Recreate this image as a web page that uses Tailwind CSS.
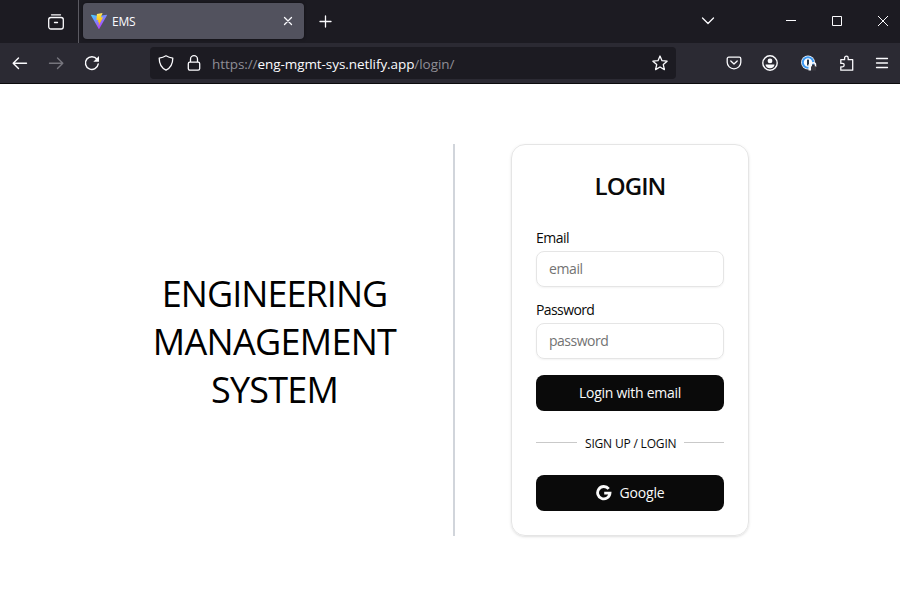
<!DOCTYPE html>
<html lang="en">
<head>
<meta charset="utf-8">
<title>EMS</title>
<script src="https://cdn.jsdelivr.net/npm/@tailwindcss/browser@4"></script>
</head>
<body class="w-[900px] h-[592px] overflow-hidden bg-white font-['Open_Sans','Noto_Sans',sans-serif] text-black">
<header class="flex flex-col h-[84px] border-b border-[#0c0c0d] bg-[#2b2a33] text-[#fbfbfe]">
  <div class="flex h-[43px] bg-[#1c1b22]">
    <div class="flex w-[79px] items-center justify-end border-r border-[#5b5a62] pr-[14px]">
      <svg class="size-4" viewBox="0 0 16 16" fill="none" stroke="currentColor" stroke-width="1.3" stroke-linecap="round"><path d="M3.500.8h9"/><rect x=".7" y="3.500" width="14.600" height="11.500" rx="2.200"/><path d="M6.500 8.500h3"/></svg>
    </div>
    <div class="ml-1 mt-[3px] flex h-9 w-[221px] items-center rounded bg-[#52525e] pl-2 pr-[11px] shadow-[0_0_3px_rgba(0,0,0,0.5)]">
      <svg class="size-4" viewBox="0 0 16 16"><defs><linearGradient id="a" x1="0" y1="0" x2=".6" y2="1"><stop stop-color="#41d1ff"/><stop offset="1" stop-color="#bd34fe"/></linearGradient><linearGradient id="b" x1=".4" y1="0" x2=".5" y2="1"><stop stop-color="#ffea83"/><stop offset=".2" stop-color="#ffdd35"/><stop offset="1" stop-color="#ffa800"/></linearGradient></defs><path fill="url(#a)" d="M15.900 2.400 8.300 15.800a.4.4 0 0 1-.7 0L.1 2.400a.4.4 0 0 1 .4-.6L8 3.100l7.500-1.300a.4.4 0 0 1 .4.600z"/><path fill="url(#b)" d="M11.600 0 5.900 1.100 5.500 7.300l1.900-.4-.6 2.600 1.400-.4-.8 4.200 4.700-9.100-2.300.4z"/></svg>
      <span class="ml-[5px] flex-1 pt-px text-[12px] tracking-[-0.2px]">EMS</span>
      <svg class="size-[10px]" viewBox="0 0 10 10" stroke="currentColor" stroke-width="1.300" stroke-linecap="round"><path d="m1.500 1.500 7 7m0-7-7 7"/></svg>
    </div>
    <svg class="ml-[15px] mt-[15px] size-[13px]" viewBox="0 0 13 13" stroke="currentColor" stroke-width="1.300" stroke-linecap="round"><path d="M6.500 1v11M1 6.500h11"/></svg>
    <svg class="ml-[369px] mt-[14px] size-[14px]" viewBox="0 0 14 14" fill="none" stroke="currentColor" stroke-width="1.300" stroke-linecap="round" stroke-linejoin="round"><path d="m1.500 4 5.500 5.500L12.500 4"/></svg>
    <svg class="ml-[71px] mt-[15px] h-[11px] w-[10px]" viewBox="0 0 10 11" stroke="currentColor"><path d="M0 5.500h10"/></svg>
    <svg class="ml-9 mt-4 size-[10px]" viewBox="0 0 10 10" fill="none" stroke="currentColor"><path d="M.5.5h9v9h-9z"/></svg>
    <svg class="ml-9 mt-4 size-[10px]" viewBox="0 0 10 10" stroke="currentColor"><path d="m0 0 10 10m0-10L0 10"/></svg>
  </div>
  <div class="flex h-10 items-center">
    <svg class="ml-3 size-4" viewBox="0 0 16 16" fill="none" stroke="currentColor" stroke-width="1.400" stroke-linecap="round" stroke-linejoin="round"><path d="M14.500 8.300h-13M6.500 3 1.200 8.300l5.300 5.300"/></svg>
    <svg class="ml-5 size-4 text-[#76757d]" viewBox="0 0 16 16" fill="none" stroke="currentColor" stroke-width="1.400" stroke-linecap="round" stroke-linejoin="round"><path d="M1.500 8.300h13M9.500 3l5.300 5.300-5.300 5.300"/></svg>
    <svg class="ml-5 size-4" viewBox="0 0 16 16" fill="none" stroke="currentColor" stroke-width="1.500" stroke-linecap="round"><path d="M13 4.200A6.400 6.400 0 1 0 14.200 9"/><path d="M15 1v5.700H9.300z" fill="currentColor" stroke="none"/></svg>
    <div class="ml-[50px] flex h-8 w-[526px] items-center rounded bg-[#1c1b22] pl-2 pr-2">
      <svg class="size-4" viewBox="0 0 16 16" fill="none" stroke="currentColor" stroke-width="1.300" stroke-linejoin="round"><path d="M8 .8c1.900 1.100 4.200 1.900 6.800 2.300 0 5.600-1.600 9.700-6.800 12.100C2.800 12.800 1.200 8.700 1.200 3.100 3.800 2.700 6.100 1.900 8 .8z"/></svg>
      <svg class="ml-3 size-4" viewBox="0 0 16 16" fill="none" stroke="currentColor" stroke-width="1.300"><rect x="2.300" y="7.200" width="11.400" height="8" rx="1.600"/><path d="M4.500 7V4.200a3.500 3.500 0 0 1 7 0V7"/></svg>
      <div class="ml-[10px] flex-1 whitespace-nowrap pt-0.5 text-[13.5px] tracking-[-0.07px] text-[#8f8e96]"><span>https://</span><span class="text-[#fbfbfe]">eng-mgmt-sys.netlify.app</span><span>/login/</span></div>
      <svg class="size-4" viewBox="0 0 16 16" fill="none" stroke="currentColor" stroke-width="1.300" stroke-linejoin="round"><path d="m8 1 2 4.700 5.100.5-3.800 3.400 1.100 5L8 12l-4.400 2.600 1.100-5L.9 6.200 6 5.700z"/></svg>
    </div>
    <svg class="ml-[50px] size-4" viewBox="0 0 16 16" fill="none" stroke="currentColor" stroke-width="1.300" stroke-linecap="round" stroke-linejoin="round"><path d="M2.700 2.200h10.600a1.500 1.500 0 0 1 1.500 1.500v3.600a6.800 6.500 0 0 1-13.600 0V3.700a1.500 1.500 0 0 1 1.500-1.500z"/><path d="m4.800 6 3.200 3 3.200-3"/></svg>
    <svg class="ml-5 size-4" viewBox="0 0 16 16"><circle cx="8" cy="8" r="7.200" fill="none" stroke="currentColor" stroke-width="1.400"/><circle cx="8" cy="5.900" r="2.400" fill="currentColor"/><path d="M3.500 9.500h9c0 2-2 3.800-4.500 3.800s-4.500-1.800-4.500-3.800z" fill="currentColor"/></svg>
    <svg class="ml-[23px] size-4" viewBox="0 0 16 16"><circle cx="7" cy="7.500" r="6.900" fill="#f4f8fc"/><circle cx="7" cy="7.500" r="5.200" fill="#fff" stroke="#3f9bf5" stroke-width="2"/><rect x="6" y="4.500" width="2" height="6" rx=".6" fill="#25364a"/><path d="M9.500 9.500H16V16H9.500z" fill="#2b2a33"/><path d="M7.500 9h2.500v6.500H7.500z" fill="#f4f8fc"/><path d="M10.300 12V9.800a2 2 0 0 1 4.200 0V12" fill="none" stroke="#fbfbfe" stroke-width="1.500"/><rect x="10" y="11.200" width="5" height="4.300" rx=".5" fill="#3a3940"/></svg>
    <svg class="ml-[22px] size-4" viewBox="0 0 16 16" fill="none" stroke="currentColor" stroke-width="1.300" stroke-linejoin="round"><path d="M1.800 4.700h3.800V2.900a1.800 1.800 0 0 1 3.600 0v1.800h4.500v10.500H1.800v-3.400h1.700a1.700 1.700 0 0 0 0-3.400H1.800z"/></svg>
    <svg class="ml-[19px] size-4" viewBox="0 0 16 16" stroke="currentColor" stroke-width="1.300" stroke-linecap="round"><path d="M2.500 3.500h11M2.500 8h11M2.500 12.500h11"/></svg>
  </div>
</header>
<main class="flex px-[151px] pt-[60px]">
  <section class="flex h-[392px] w-[304px] items-center border-r-2 border-[#d1d5db] pr-[53px]">
    <h1 class="flex w-[247px] flex-col items-center whitespace-nowrap pt-1 text-[36px] leading-[48px]"><span class="tracking-[-0.95px]">ENGINEERING</span><span class="tracking-[-0.7px]">MANAGEMENT</span><span class="tracking-[-0.8px]">SYSTEM</span></h1>
  </section>
  <section class="ml-14 flex h-[392px] w-[238px] shrink-0 flex-col rounded-[14px] border border-[#e5e5e5] px-6 pb-6 pt-6 text-[14px] text-[#0a0a0a] shadow-[0_1px_3px_rgba(0,0,0,0.1),0_1px_2px_-1px_rgba(0,0,0,0.1)]">
    <h2 class="h-9 text-center text-[24px] leading-[34px] font-semibold tracking-[-0.9px]">LOGIN</h2>
    <label class="mt-[23px] h-5 leading-5 tracking-[-0.5px]">Email</label>
    <input placeholder="email" class="mt-[3px] h-9 w-full shrink-0 rounded-lg border border-[#e5e5e5] px-3 pb-px text-[14px] tracking-[-0.4px] shadow-xs placeholder:text-[#737373]">
    <label class="mt-[13px] h-5 leading-5 tracking-[-0.6px]">Password</label>
    <input placeholder="password" class="mt-[3px] h-9 w-full shrink-0 rounded-lg border border-[#e5e5e5] px-3 pb-px text-[14px] tracking-[-0.5px] shadow-xs placeholder:text-[#737373]">
    <button class="mt-4 h-9 shrink-0 rounded-lg bg-[#0a0a0a] pb-px tracking-[-0.27px] text-[#fafafa]">Login with email</button>
    <div class="mt-[22px] flex h-5 items-center gap-2 whitespace-nowrap text-[12px]"><i class="mb-px h-px w-[41px] shrink-0 bg-[#c9c9c9]"></i><span class="flex-1 pt-px text-center leading-5 tracking-[-0.18px]">SIGN UP / LOGIN</span><i class="mb-px h-px w-10 shrink-0 bg-[#c9c9c9]"></i></div>
    <button class="mt-[22px] flex h-9 shrink-0 items-center justify-center gap-2 rounded-lg bg-[#0a0a0a] tracking-[-0.2px] text-[#fafafa]">
      <svg class="size-4" viewBox="0 0 16 16" fill="none" stroke="currentColor" stroke-width="2.800"><path d="M12.700 3.900A6.200 6.200 0 1 0 14 8.200H8.200"/></svg>
      <span class="pb-px">Google</span></button>
  </section>
</main>
</body>
</html>
